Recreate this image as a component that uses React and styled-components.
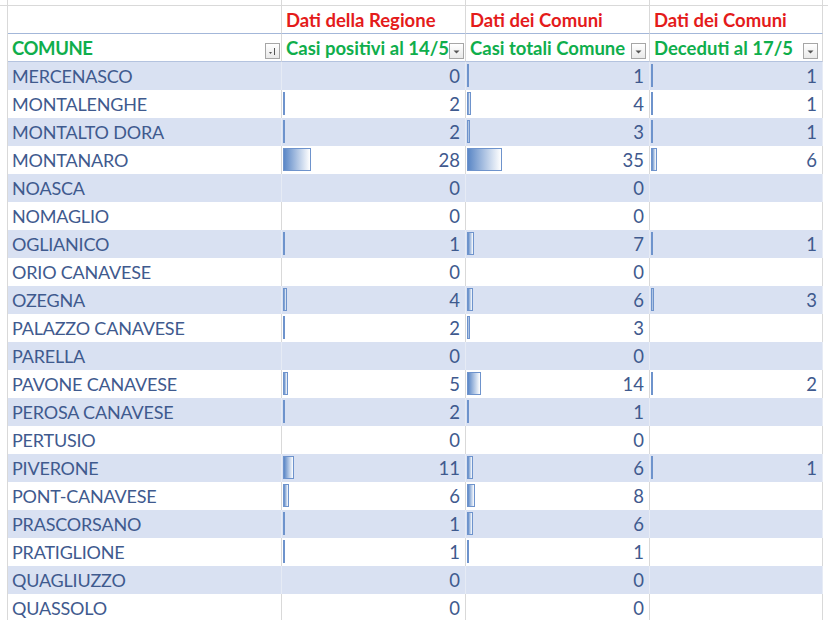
import React from 'react';
import styled, { createGlobalStyle } from 'styled-components';

const GlobalStyle = createGlobalStyle`
  html, body {
    margin: 0;
    padding: 0;
    background: #ffffff;
  }
  body {
    font-family: Lato, "Open Sans", "Liberation Sans", sans-serif;
    overflow: hidden;
  }
`;

const GRID = '#D9D9D9';
const BAND = '#D9E1F2';
const TEXT = '#3F5A8E';
const COLS = '8px 274px 184px 184px 173px 1fr';

const rows = [
  ['MERCENASCO', 0, 1, 1],
  ['MONTALENGHE', 2, 4, 1],
  ['MONTALTO DORA', 2, 3, 1],
  ['MONTANARO', 28, 35, 6],
  ['NOASCA', 0, 0, null],
  ['NOMAGLIO', 0, 0, null],
  ['OGLIANICO', 1, 7, 1],
  ['ORIO CANAVESE', 0, 0, null],
  ['OZEGNA', 4, 6, 3],
  ['PALAZZO CANAVESE', 2, 3, null],
  ['PARELLA', 0, 0, null],
  ['PAVONE CANAVESE', 5, 14, 2],
  ['PEROSA CANAVESE', 2, 1, null],
  ['PERTUSIO', 0, 0, null],
  ['PIVERONE', 11, 6, 1],
  ['PONT-CANAVESE', 6, 8, null],
  ['PRASCORSANO', 1, 6, null],
  ['PRATIGLIONE', 1, 1, null],
  ['QUAGLIUZZO', 0, 0, null],
  ['QUASSOLO', 0, 0, null],
];

const Sheet = styled.div`
  width: 828px;
  height: 620px;
  overflow: hidden;
  background: #fff;
`;

const Row = styled.div`
  display: grid;
  grid-template-columns: ${COLS};
  height: ${p => p.$h}px;
`;

const Cell = styled.div`
  position: relative;
  box-sizing: border-box;
  display: flex;
  align-items: center;
  justify-content: ${p => (p.$num ? 'flex-end' : 'flex-start')};
  padding: 0 ${p => (p.$num ? 5 : 4)}px;
  background: ${p => (p.$band ? BAND : '#fff')};
  border-right: 1px solid ${p => (p.$band ? '#E6EBF5' : GRID)};
  border-bottom: ${p => (p.$bottom ? `1px solid ${p.$bottom}` : 'none')};
  color: ${TEXT};
  font-size: 18.5px;
  white-space: nowrap;
  overflow: hidden;
`;

const Name = styled.span`
  font-size: 18px;
  letter-spacing: -0.2px;
`;

const Pad = styled.div`
  box-sizing: border-box;
  border-right: ${p => (p.$last ? 'none' : `1px solid ${GRID}`)};
  border-bottom: ${p => (p.$bottom ? `1px solid ${GRID}` : 'none')};
`;

const Title = styled.span`
  font-weight: 700;
  color: ${p => p.$color};
  letter-spacing: ${p => (p.$tight ? '-0.4px' : '0')};
`;

const FilterBtn = styled.div`
  position: absolute;
  right: ${p => p.$right}px;
  bottom: 2px;
  width: 13px;
  height: 14px;
  border: 1px solid #A6A6A6;
  background: linear-gradient(#ffffff, #e9e9e9);
  display: flex;
  align-items: center;
  justify-content: center;
`;

const Bar = styled.div`
  position: absolute;
  left: 1px;
  top: 2px;
  bottom: 3px;
  box-sizing: border-box;
  border: 1px solid #6E93CC;
  background: linear-gradient(to right, #5B87C6, #ffffff);
`;

const Value = styled.span`
  position: relative;
`;

function Filter({ sorted, right }) {
  return (
    <FilterBtn $right={right}>
      {sorted ? (
        <svg width="11" height="11" viewBox="0 0 11 11">
          <path d="M2 6 L5 6 L3.5 8 Z" fill="#555" />
          <rect x="7" y="2" width="1" height="7" fill="#555" />
        </svg>
      ) : (
        <svg width="9" height="9" viewBox="0 0 9 9">
          <path d="M1.5 3.5 L7.5 3.5 L4.5 6.5 Z" fill="#555" />
        </svg>
      )}
    </FilterBtn>
  );
}

function NumCell({ value, band }) {
  return (
    <Cell $num $band={band}>
      {value > 0 && <Bar style={{ width: Math.max(2, value) }} />}
      {value !== null && <Value>{value}</Value>}
    </Cell>
  );
}

export default function App() {
  return (
    <>
      <GlobalStyle />
      <Sheet>
        <Row $h={6}>
          <Pad $bottom />
          <Pad $bottom />
          <Pad $bottom />
          <Pad $bottom />
          <Pad $bottom />
          <Pad $bottom $last />
        </Row>
        <Row $h={28}>
          <Pad />
          <Cell $bottom="#A3B7D9" />
          <Cell $bottom="#A3B7D9"><Title $color="#E41B1B">Dati della Regione</Title></Cell>
          <Cell $bottom="#A3B7D9"><Title $color="#E41B1B">Dati dei Comuni</Title></Cell>
          <Cell $bottom="#A3B7D9"><Title $color="#E41B1B">Dati dei Comuni</Title></Cell>
          <Pad $last />
        </Row>
        <Row $h={28}>
          <Pad />
          <Cell $bottom="#B4C3DF">
            <Title $color="#0FAE4C" $tight>COMUNE</Title>
            <Filter sorted right={1} />
          </Cell>
          <Cell $bottom="#B4C3DF">
            <Title $color="#0FAE4C">Casi positivi al 14/5</Title>
            <Filter right={1} />
          </Cell>
          <Cell $bottom="#B4C3DF">
            <Title $color="#0FAE4C">Casi totali Comune</Title>
            <Filter right={3} />
          </Cell>
          <Cell $bottom="#B4C3DF">
            <Title $color="#0FAE4C">Deceduti al 17/5</Title>
            <Filter right={4} />
          </Cell>
          <Pad $last />
        </Row>
        {rows.map(([name, b, c, d], i) => {
          const band = i % 2 === 0;
          return (
            <Row $h={28} key={name}>
              <Pad />
              <Cell $band={band}><Name>{name}</Name></Cell>
              <NumCell value={b} band={band} />
              <NumCell value={c} band={band} />
              <NumCell value={d} band={band} />
              <Pad $last />
            </Row>
          );
        })}
      </Sheet>
    </>
  );
}
